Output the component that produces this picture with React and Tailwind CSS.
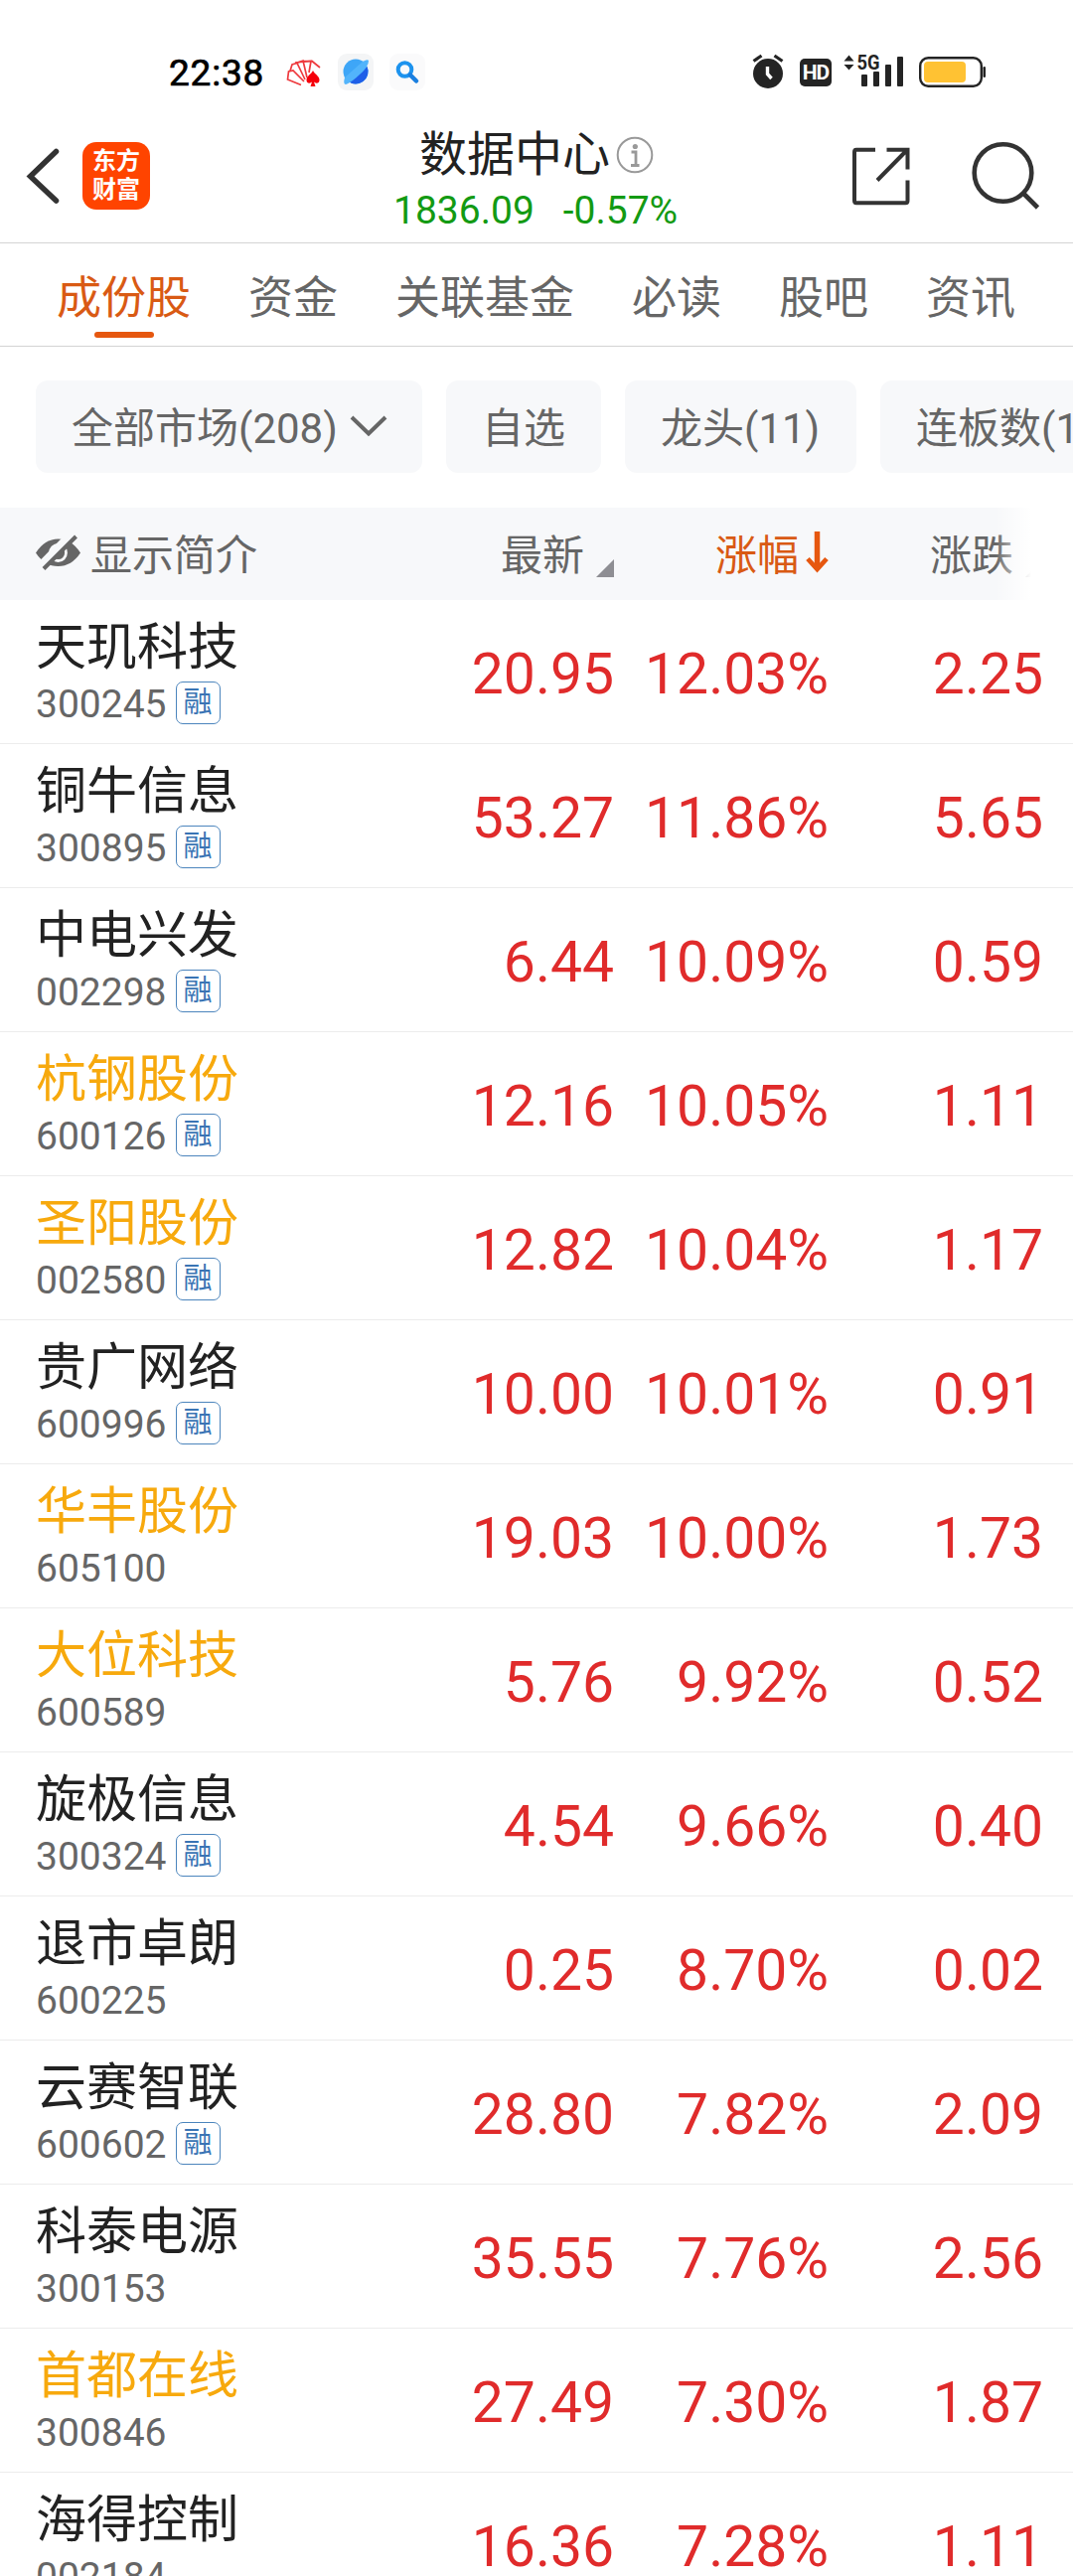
import React from "react";

const TABS = ["成份股", "资金", "关联基金", "必读", "股吧", "资讯"];

const STOCKS = [
  { name: "天玑科技", code: "300245", margin: true,  price: "20.95", pct: "12.03%", diff: "2.25" },
  { name: "铜牛信息", code: "300895", margin: true,  price: "53.27", pct: "11.86%", diff: "5.65" },
  { name: "中电兴发", code: "002298", margin: true,  price: "6.44",  pct: "10.09%", diff: "0.59" },
  { name: "杭钢股份", code: "600126", margin: true,  price: "12.16", pct: "10.05%", diff: "1.11", starred: true },
  { name: "圣阳股份", code: "002580", margin: true,  price: "12.82", pct: "10.04%", diff: "1.17", starred: true },
  { name: "贵广网络", code: "600996", margin: true,  price: "10.00", pct: "10.01%", diff: "0.91" },
  { name: "华丰股份", code: "605100", margin: false, price: "19.03", pct: "10.00%", diff: "1.73", starred: true },
  { name: "大位科技", code: "600589", margin: false, price: "5.76",  pct: "9.92%",  diff: "0.52", starred: true },
  { name: "旋极信息", code: "300324", margin: true,  price: "4.54",  pct: "9.66%",  diff: "0.40" },
  { name: "退市卓朗", code: "600225", margin: false, price: "0.25",  pct: "8.70%",  diff: "0.02" },
  { name: "云赛智联", code: "600602", margin: true,  price: "28.80", pct: "7.82%",  diff: "2.09" },
  { name: "科泰电源", code: "300153", margin: false, price: "35.55", pct: "7.76%",  diff: "2.56" },
  { name: "首都在线", code: "300846", margin: false, price: "27.49", pct: "7.30%",  diff: "1.87", starred: true },
  { name: "海得控制", code: "002184", margin: false, price: "16.36", pct: "7.28%",  diff: "1.11" },
];

/* ── status bar ─────────────────────────────────────────────── */
function StatusBar() {
  return (
    <div className="flex h-[120px] items-start pt-[53px] pl-[170px] pr-[87px]">
      <span className="w-[118px] text-[37px] leading-[42px] tracking-[0.8px] text-black [-webkit-text-stroke:0.7px_black]">22:38</span>

      {/* fan of cards */}
      <svg width="36" height="40" viewBox="0 0 36 40" fill="none">
        <g stroke="#ee3a3e" strokeWidth="1.700">
          <path d="M15 32.500 L1.500 27 L2.500 19 L7 18 L18 29" />
          <path d="M4 18.500 L6 12 L11 10.500 L19 27" />
          <path d="M10 10.500 L17 8 L21 25" />
          <path d="M17 8.500 L25 8.500 L23 20" />
          <path d="M9 10 L26 8.500 L34 15" />
        </g>
        <path d="M27 18 C25.500 21.500 20.500 23.500 20.500 27.500 C20.500 31 24 31.500 26 29.500 L24.500 34 H29.500 L28 29.500 C30 31.500 33.500 31 33.500 27.500 C33.500 23.500 28.500 21.500 27 18Z" fill="#f5000a" />
      </svg>

      {/* planet browser */}
      <svg className="ml-[16px] -mt-px" width="38" height="40" viewBox="0 0 38 40">
        <rect x="0" y="2" width="36" height="37" rx="9" fill="#f4f5f6" />
        <circle cx="18" cy="20" r="12.500" fill="#3ea6f7" />
        <path d="M29.500 15 A12.500 12.500 0 0 1 10 29.500 Q22 25 29.500 15Z" fill="#1f5fe8" />
        <path d="M25 10 Q30 7 31 9 Q31 14 24 21 Q14 31 8 33 Q5 33 7 26Z" fill="#52b4fb" />
      </svg>

      {/* search app */}
      <svg className="ml-[14px] -mt-px" width="38" height="40" viewBox="0 0 38 40" fill="none">
        <rect x="0" y="2" width="36" height="37" rx="9" fill="#fafafb" />
        <circle cx="15.500" cy="18" r="6.800" stroke="#1d93ee" strokeWidth="4" />
        <path d="M21 23.500 L27 29.500" stroke="#1a7fe0" strokeWidth="4.500" strokeLinecap="round" />
      </svg>

      <div className="ml-auto flex items-start">
        {/* alarm */}
        <svg width="34" height="38" viewBox="0 0 34 38" fill="none">
          <circle cx="17" cy="21" r="15" fill="#242424" />
          <path d="M2.500 8.500 L10.500 3 M31.500 8.500 L23.500 3" stroke="#242424" strokeWidth="3.200" />
          <path d="M16.500 14 V21.500 L20.500 26" stroke="#fff" strokeWidth="3.400" />
        </svg>
        <span className="ml-[15px] mt-[6px] flex h-[28px] w-[32px] items-center justify-center rounded-[5px] bg-[#242424] text-[21px] leading-none font-bold tracking-[-1px] text-white">
          HD
        </span>
        {/* 5G signal */}
        <svg className="ml-[12px] overflow-visible" width="62" height="38" viewBox="0 0 62 38" fill="#242424">
          <path d="M0.500 8.500 L5.500 2.500 L10.500 8.500Z M0.500 12 H10.500 L5.500 17.500Z" />
          <text x="13.500" y="17" fontFamily="Roboto" fontWeight="700" fontSize="20" textLength="23" lengthAdjust="spacingAndGlyphs">5G</text>
          <rect x="18" y="22" width="6" height="12" rx="1" />
          <rect x="30" y="19" width="6" height="15" rx="1" />
          <rect x="42" y="12" width="6" height="22" rx="1" />
          <rect x="54" y="4" width="6" height="30" rx="1" />
        </svg>
        {/* battery */}
        <svg className="ml-[14px]" width="68" height="38" viewBox="0 0 68 38" fill="none">
          <rect x="1.200" y="5.200" width="61.600" height="28.600" rx="8" stroke="#242424" strokeWidth="2.400" />
          <rect x="5" y="9" width="42" height="21" rx="4" fill="#ffc233" />
          <rect x="64.500" y="14" width="2.500" height="11" rx="1.200" fill="#242424" />
        </svg>
      </div>
    </div>
  );
}

/* ── title bar ──────────────────────────────────────────────── */
function TitleBar() {
  return (
    <div className="flex h-[125px] items-start border-b border-[#d4d4d4] pl-[26px]">
      <svg className="mt-[29px]" width="34" height="57" viewBox="0 0 34 57" fill="none" stroke="#333" strokeWidth="5.500">
        <path d="M30.500 3.500 L4.500 28.500 L30.500 53" strokeLinecap="round" />
      </svg>
      <div className="ml-[23px] mt-[23px] flex h-[68px] w-[68px] flex-col items-center justify-center rounded-[14px] bg-[#ff4400] text-[24px] leading-[29px] font-bold text-white">
        <span>东方</span>
        <span>财富</span>
      </div>

      <div className="ml-[246px] w-[286px]">
        <div className="mt-[4px] flex h-[64px] items-center pl-[25px]">
          <span className="text-[48px] leading-[64px] text-[#222]">数据中心</span>
          <svg className="ml-[6px] shrink-0" width="38" height="38" viewBox="0 0 38 38" fill="none" stroke="#999">
            <circle cx="19" cy="19" r="17.300" strokeWidth="2" />
            <circle cx="19.300" cy="10.500" r="2.600" fill="#999" stroke="none" />
            <path d="M15.500 16 H20 V29.500 M15 29.500 H23.500" strokeWidth="2.800" />
          </svg>
        </div>
        <div className="mt-px -ml-px flex gap-[29px] text-[39px] leading-[46px] whitespace-nowrap text-[#139a13]">
          <span>1836.09</span>
          <span>-0.57%</span>
        </div>
      </div>

      <svg className="ml-[174px] mt-[28px]" width="60" height="60" viewBox="0 0 60 60" fill="none" stroke="#333" strokeWidth="4">
        <path d="M24 2.700 H5 Q3 2.700 3 5 V54 Q3 56.200 5 56.200 H54.500 Q56.500 56.200 56.500 54 V33.500" />
        <path d="M35.500 2.700 H56.500 V22.500 M55 4 L26 33.500" />
      </svg>
      <svg className="ml-[60px] mt-[20px]" width="72" height="72" viewBox="0 0 72 72" fill="none" stroke="#333" strokeWidth="4.600">
        <circle cx="32.500" cy="34" r="28.800" />
        <path d="M53 54.500 L67.500 69" />
      </svg>
    </div>
  );
}

function Tabs() {
  return (
    <div className="flex h-[104px] gap-[58px] border-b border-[#d4d4d4] pl-[57px] text-[45px] whitespace-nowrap text-[#666]">
      {TABS.map((t, i) => (
        <div key={t} className="flex flex-col items-center">
          <span className={`mt-[21px] h-[68px] leading-[70px] ${i === 0 ? "text-[#d95a14]" : ""}`}>{t}</span>
          {i === 0 && <span className="h-[6px] w-[60px] rounded-full bg-[#e6570f]" />}
        </div>
      ))}
    </div>
  );
}

function Chip({ width, children }) {
  return (
    <div className={`flex h-[93px] shrink-0 items-center rounded-[12px] bg-[#f7f8fa] pt-[4px] pl-[36px] ${width}`}>
      {children}
    </div>
  );
}

function Filters() {
  return (
    <div className="flex h-[162px] gap-[24px] overflow-hidden pt-[34px] pl-[36px] text-[42px] whitespace-nowrap text-[#666]">
      <Chip width="w-[389px]">
        <span>全部市场(208)</span>
        <svg className="ml-[12px] -mt-[6px]" width="38" height="24" viewBox="0 0 38 24" fill="none">
          <path d="M2 3 L19 19.500 L36 3" stroke="#666" strokeWidth="4" />
        </svg>
      </Chip>
      <Chip width="w-[156px]">自选</Chip>
      <Chip width="w-[233px]">龙头(11)</Chip>
      <Chip width="w-[260px]">连板数(11)</Chip>
    </div>
  );
}

/* ── table ──────────────────────────────────────────────────── */
function SortCorner() {
  return (
    <svg className="mt-[24px]" width="18" height="18" viewBox="0 0 18 18">
      <path d="M18 0 V18 H0Z" fill="#8e8e93" />
    </svg>
  );
}

function TableHead() {
  return (
    <div className="relative flex h-[93px] items-center overflow-hidden bg-[#f7f8fa] pt-[4px] pl-[36px] text-[42px] whitespace-nowrap text-[#666]">
      <div className="flex w-[364px] items-center">
        <svg className="-mt-[8px] mr-[10px]" width="45" height="36" viewBox="0 0 45 36" fill="none">
          <path d="M0 18.500 Q9 4.500 22.500 4.500 Q36 4.500 45 18.500 Q36 32 22.500 32 Q9 32 0 18.500Z" fill="#666" />
          <circle cx="22.500" cy="18.500" r="8" stroke="#f7f8fa" strokeWidth="2.800" />
          <path d="M4 33 L36 0" stroke="#f7f8fa" strokeWidth="9" />
          <path d="M8 34.500 L40.500 2" stroke="#666" strokeWidth="4" />
        </svg>
        <span>显示简介</span>
      </div>
      <div className="flex w-[218px] items-center justify-end gap-[12px]">
        <span>最新</span>
        <SortCorner />
      </div>
      <div className="flex w-[216px] items-center justify-end gap-[7px] text-[#d95a14]">
        <span>涨幅</span>
        <svg className="-mt-[7px]" width="23" height="42" viewBox="0 0 23 42" fill="none" stroke="#e6570f">
          <path d="M11.500 0 V38" strokeWidth="5.500" />
          <path d="M2 27.500 L11.500 38 L21 27.500" strokeWidth="4.800" />
        </svg>
      </div>
      <div className="flex w-[216px] items-center justify-end gap-[12px]">
        <span>涨跌</span>
        <SortCorner />
      </div>
      {/* fades the scrolled-off columns */}
      <div className="absolute inset-y-0 right-0 w-[78px] bg-linear-to-r from-white/0 to-white to-46%" />
    </div>
  );
}

function StockRow({ stock }) {
  return (
    <div className="flex h-[145px] border-b border-[#ececec] pl-[36px]">
      <div className="w-[364px] pt-[16px]">
        <div className={`text-[51px] leading-[64px] ${stock.starred ? "text-[#f7a90d]" : "text-[#222]"}`}>
          {stock.name}
        </div>
        <div className="flex items-center pt-px">
          <span className="text-[39px] leading-[48px] text-[#666]">{stock.code}</span>
          {stock.margin && (
            <span className="ml-[9px] -mt-[4px] flex h-[43px] w-[45px] items-center justify-center rounded-[7px] border border-[#4c85bd] text-[29px] leading-none text-[#3a74b4]">
              融
            </span>
          )}
        </div>
      </div>
      <div className="flex h-[148px] items-center text-right text-[57px] leading-none text-[#e02b2b]">
        <span className="w-[218px]">{stock.price}</span>
        <span className="w-[216px]">{stock.pct}</span>
        <span className="w-[216px]">{stock.diff}</span>
      </div>
    </div>
  );
}

export default function App() {
  return (
    <div className="h-[2593px] w-[1080px] overflow-hidden bg-white font-['Roboto','Noto_Sans_CJK_SC',sans-serif]">
      <StatusBar />
      <TitleBar />
      <Tabs />
      <Filters />
      <TableHead />
      {STOCKS.map((s) => (
        <StockRow key={s.code} stock={s} />
      ))}
    </div>
  );
}
